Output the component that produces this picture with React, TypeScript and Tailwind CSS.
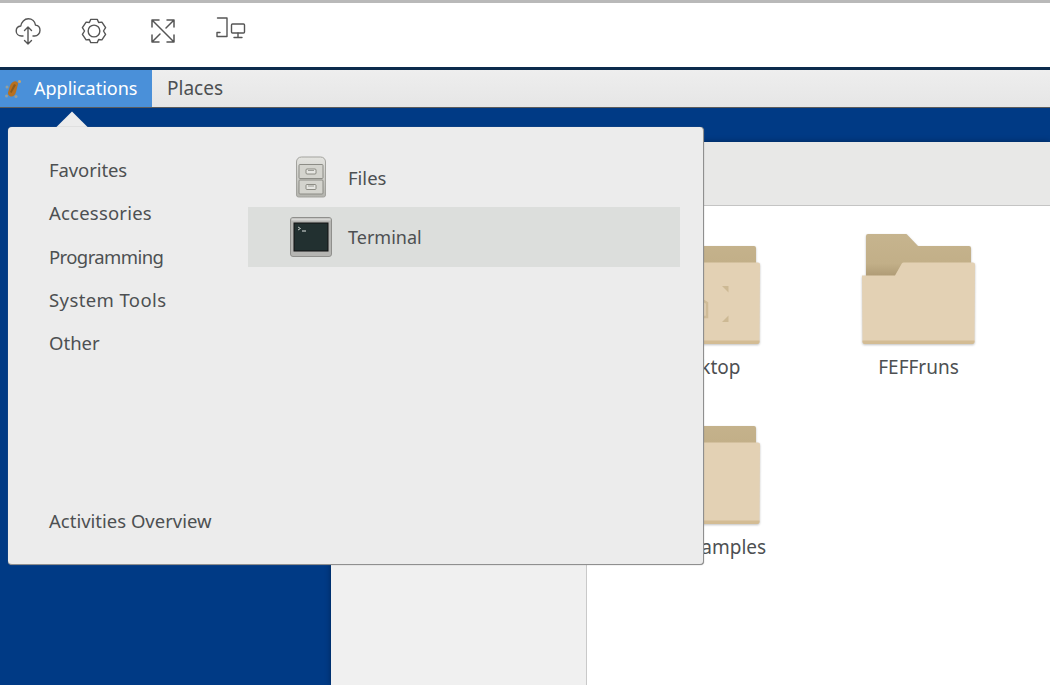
import React from 'react';

const font = { fontFamily: '"Noto Sans", sans-serif' };

const CloudIcon = () => (
    <svg width="26" height="30" viewBox="0 0 26 30" fill="none" stroke="#555" strokeWidth="1.4" strokeLinecap="round" strokeLinejoin="round">
        <path d="M8 20H6.500C3.500 20 1.200 17.800 1.200 15c0-2.600 2-4.700 4.600-5C6.400 6 9.400 2.800 13.300 2.800c3.700 0 6.700 2.700 7.200 6.300 2.600.3 4.500 2.500 4.500 5.100 0 3.100-2.300 5.800-5.400 5.800H18" />
        <path d="M13 11v17M9.500 14.500 13 11l3.500 3.500M9.500 24.500 13 28l3.500-3.500" />
    </svg>
);

const GearIcon = () => (
    <svg width="26" height="26" viewBox="0 0 28 28" fill="none" stroke="#555" strokeWidth="1.5" strokeLinejoin="round">
        <path d="M10.500 1.500h7l1.500 3.300 3.500-.4 4 6-2.300 3.600 2.300 3.600-4 6-3.500-.4-1.500 3.300h-7L9 23.200l-3.500.4-4-6L3.800 14l-2.300-3.600 4-6 3.500.4z" />
        <circle cx="14" cy="14" r="6.300" />
    </svg>
);

const ExpandIcon = () => (
    <svg width="26" height="26" viewBox="0 0 26 26" fill="none" stroke="#555" strokeWidth="1.5" strokeLinecap="round" strokeLinejoin="round">
        <path d="M2 9V2h7M2 2l22 22M17 24h7v-7M24 9V2h-7M24 2l-8 8M2 17v7h7M2 24l8-8" />
    </svg>
);

const DevicesIcon = () => (
    <svg width="30" height="22" viewBox="0 0 30 22" fill="none" stroke="#555" strokeWidth="1.4" strokeLinecap="round" strokeLinejoin="round">
        <path d="M1.500 1H11v18.500H1v-4h3" />
        <rect x="15.500" y="7" width="13" height="9" rx="1" />
        <path d="M22 16v4M18 20.500h8" />
    </svg>
);

const GeckoIcon = () => (
    <svg width="18" height="20" viewBox="0 0 18 20">
        <path d="M9 3c2-1.500 5-.5 5 2l-2 8c-.5 2.500-2.500 4.500-4.500 4.500S3.500 15.500 4 13.500L6 7c.5-2 1.500-3 3-4z" fill="#b8701f" />
        <path d="M10 5l2 1-4.500 8L6 13z" fill="#8a5a1e" />
        <circle cx="15.500" cy="2.500" r="1.500" fill="#c9a468" />
        <circle cx="3" cy="8" r="1.500" fill="#93a0a0" />
        <circle cx="2.500" cy="17" r="1.500" fill="#93a0a0" />
        <circle cx="12" cy="17.500" r="1.500" fill="#93a0a0" />
    </svg>
);

const FilesIcon = () => (
    <svg width="32" height="42" viewBox="0 0 32 42">
        <defs>
            <linearGradient id="cabinet" x1="0" y1="0" x2="0" y2="1">
                <stop offset="0" stopColor="#e4e4e0" />
                <stop offset="1" stopColor="#b4b4ae" />
            </linearGradient>
        </defs>
        <path d="M1.500 6c0-3 2-5 5-5h19c3 0 5 2 5 5v33a2 2 0 0 1-2 2h-25a2 2 0 0 1-2-2z" fill="url(#cabinet)" stroke="#a3a39e" />
        <rect x="4" y="8.500" width="24" height="14" rx="1" fill="#d4d4ce" stroke="#8c8c86" />
        <rect x="4" y="24" width="24" height="14" rx="1" fill="#d4d4ce" stroke="#8c8c86" />
        <rect x="11" y="13" width="10" height="5" rx="1" fill="#e6e6e2" stroke="#77776f" strokeWidth="0.8" />
        <path d="M13 14.500h6" stroke="#8a8a84" strokeWidth="0.8" />
        <rect x="11" y="28.500" width="10" height="5" rx="1" fill="#e6e6e2" stroke="#77776f" strokeWidth="0.8" />
        <path d="M13 30h6" stroke="#8a8a84" strokeWidth="0.8" />
    </svg>
);

const TerminalIcon = () => (
    <svg width="42" height="40" viewBox="0 0 42 40">
        <rect x="0.500" y="0.500" width="41" height="39" rx="2.500" fill="#b5b5b2" stroke="#8f8f8c" />
        <rect x="1.500" y="1.500" width="39" height="2" fill="#d6d6d3" />
        <rect x="4" y="6" width="34" height="28" fill="#223030" stroke="#111" />
        <path d="M8 10l2.500 1.500L8 13" fill="none" stroke="#cfd6d4" strokeWidth="0.9" />
        <path d="M12 14h4" stroke="#cfd6d4" strokeWidth="1.100" />
    </svg>
);

const Folder = ({ emblem }: { emblem?: boolean }) => (
    <svg width="113" height="112" viewBox="0 0 113 112" className="drop-shadow-[0_1px_1px_rgba(0,0,0,0.25)]">
        <defs>
            <linearGradient id="folderTab" x1="0" y1="0" x2="0" y2="1">
                <stop offset="0" stopColor="#c6b48e" />
                <stop offset="0.6" stopColor="#c2af88" />
                <stop offset="0.85" stopColor="#b09c76" />
            </linearGradient>
        </defs>
        <path d="M4 3a2 2 0 0 1 2-2h37.500c1 0 1.500.4 2 1L56 13h51a2 2 0 0 1 2 2V50H4z" fill="url(#folderTab)" />
        <path d="M0 42.500h33L39.500 31c.4-.7 1-1.500 2-1.500H111a2 2 0 0 1 2 2l-.5 77a2 2 0 0 1-2 2H2.500a2 2 0 0 1-2-2z" fill="#e3d1b4" />
        <path d="M.500 107.500h112v1.500a2 2 0 0 1-2 2H2.500a2 2 0 0 1-2-2z" fill="#d3bc94" />
        {emblem && (
            <g fill="#cdb994">
                <path d="M75 53l6.500 6.500V53z" />
                <path d="M75 89l6.500-6.500V89z" />
                <path d="M50 64l10 6v14H50" fill="none" stroke="#d0bc98" strokeWidth="2.500" />
            </g>
        )}
    </svg>
);

const categories = [
    { name: 'Favorites', className: 'tracking-[-0.1px]' },
    { name: 'Accessories', className: 'tracking-[0.2px]' },
    { name: 'Programming', className: 'tracking-[-0.6px]' },
    { name: 'System Tools', className: 'tracking-[0.4px]' },
    { name: 'Other', className: '' },
];

const App = () => {
    return (
        <div className="relative w-[1050px] h-[685px] overflow-hidden flex flex-col bg-[#003a85] text-[#4d5052]" style={font}>
            <div className="h-[3px] bg-[#b9b9b9]" />

            <div className="h-[64px] bg-white flex items-start pl-[15px] pt-[12px]">
                <div className="w-[66px] h-[32px] flex items-center"><CloudIcon /></div>
                <div className="w-[69px] h-[32px] flex items-center"><GearIcon /></div>
                <div className="w-[66px] h-[32px] flex items-center"><ExpandIcon /></div>
                <div className="h-[26px] flex items-center"><DevicesIcon /></div>
            </div>

            <div className="h-[3px] bg-[#0c2b4d]" />

            <div className="h-[38px] bg-gradient-to-b from-[#eeeeee] to-[#e6e6e6] border-b border-[#5c5c5c] flex items-stretch">
                <div className="w-[152px] bg-[#4a90d9] text-white flex items-center pl-[4px] gap-[12px] text-[18px]">
                    <GeckoIcon />
                    <span>Applications</span>
                </div>
                <div className="pl-[15px] flex items-center text-[19px]">Places</div>
            </div>

            {/* file manager window behind the menu */}
            <div className="flex-1 pl-[331px] pt-[34px] min-h-0">
                <div className="h-full flex flex-col shadow-[0_0_6px_rgba(0,0,0,0.35)]">
                    <div className="h-[64px] shrink-0 bg-[#e8e8e7] border-b border-[#c4c4c4]" />
                    <div className="flex-1 flex min-h-0">
                        <div className="w-[256px] bg-[#f0f0f0] border-r border-[#c9c9c9]" />
                        <div className="flex-1 bg-white pl-[60px] pt-[27px] grid grid-cols-[215px_113px] content-start gap-y-[33px] text-[19px]">
                            <div className="flex flex-col items-center w-[113px]">
                                <Folder emblem />
                                <span className="mt-[9px] leading-[26px]">Desktop</span>
                            </div>
                            <div className="flex flex-col items-center w-[113px]">
                                <Folder />
                                <span className="mt-[9px] leading-[26px] whitespace-nowrap">FEFFruns</span>
                            </div>
                            <div className="flex flex-col items-center w-[113px]">
                                <Folder />
                                <span className="mt-[9px] leading-[26px] whitespace-nowrap">FEFFexamples</span>
                            </div>
                        </div>
                    </div>
                </div>
            </div>

            {/* applications menu */}
            <div className="absolute left-[61px] top-[116px] w-[22px] h-[22px] rotate-45 bg-[#ececec]" />
            <div className="absolute left-[8px] top-[127px] w-[696px] h-[438px] rounded-[4px] bg-[#ececec] border-r border-b border-[#8f8f8f] shadow-[0_0_1px_#777] flex text-[18.500px]">
                <div className="w-[240px] pl-[41px] pt-[30px] pb-[30px] flex flex-col justify-between">
                    <div className="flex flex-col gap-[17.300px]">
                        {categories.map((item) => (
                            <div key={item.name} className={`leading-[26px] ${item.className}`}>{item.name}</div>
                        ))}
                    </div>
                    <div className="leading-[26px]">Activities Overview</div>
                </div>
                <div className="w-[432px] pt-[20px]">
                    <div className="h-[60px] flex items-center pl-[47px] gap-[21px]">
                        <FilesIcon />
                        <span className="pt-[2px]">Files</span>
                    </div>
                    <div className="h-[60px] bg-[#dcdedc] flex items-center pl-[42px] gap-[16px] text-[18px]">
                        <TerminalIcon />
                        <span>Terminal</span>
                    </div>
                </div>
            </div>
        </div>
    );
};

export default App;
